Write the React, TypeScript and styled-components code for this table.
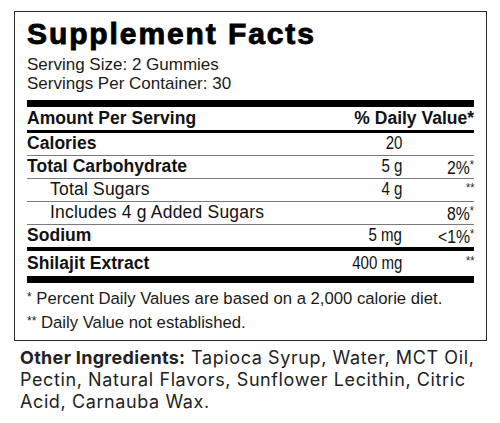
import React from "react";
import styled, { createGlobalStyle } from "styled-components";

const GlobalStyle = createGlobalStyle`
  html, body { margin: 0; padding: 0; background: #ffffff; }
  body { font-family: "Liberation Sans", Arial, sans-serif; color: #111; }
`;

const Page = styled.div`
  width: 500px;
  height: 423px;
  box-sizing: border-box;
  padding: 11px 13px 0 14px;
  overflow: hidden;
`;

const Label = styled.section`
  box-sizing: border-box;
  width: 473px;
  border: 1.5px solid #2a2a2a;
  padding: 0 12px 0 12px;
`;

const Title = styled.h1`
  margin: 4.5px 0 0 0;
  font-family: "Liberation Sans", Arial, sans-serif;
  font-weight: 700;
  font-size: 30px;
  line-height: 34px;
  letter-spacing: 1.9px;
  -webkit-text-stroke: 0.9px #000;
  color: #000;
`;

const Serving = styled.div`
  margin-top: 4px;
  font-size: 17px;
  line-height: 19px;
  color: #1a1a1a;
`;

const ServingLine = styled.div`
  white-space: nowrap;
`;

const Rule = styled.div<{ $h: number; $gap?: number }>`
  height: ${(p) => p.$h}px;
  margin-top: ${(p) => p.$gap ?? 0}px;
  background: #000;
`;

const Row = styled.div<{ $h?: number; $line?: boolean }>`
  display: grid;
  grid-template-columns: 1fr auto 72px;
  align-items: center;
  height: ${(p) => p.$h ?? 22}px;
  border-bottom: ${(p) => (p.$line ? "1px solid #7a7a7a" : "none")};
  font-size: 17.5px;
  line-height: 19px;
  color: #111;
`;

const Name = styled.span<{ $bold?: boolean; $indent?: boolean }>`
  font-weight: ${(p) => (p.$bold ? 700 : 400)};
  letter-spacing: ${(p) => (p.$bold ? 0.05 : 0.2)}px;
  padding-left: ${(p) => (p.$indent ? 23 : 0)}px;
  white-space: nowrap;
`;

const Amount = styled.span`
  display: inline-block;
  text-align: right;
  transform: scaleX(0.86);
  transform-origin: right center;
  white-space: nowrap;
`;

const DV = styled.span`
  display: block;
  text-align: right;
  white-space: nowrap;
`;

const DVText = styled.span`
  display: inline-block;
  transform: scaleX(0.9);
  transform-origin: right center;
`;

const Star = styled.span`
  font-size: 12px;
  vertical-align: 5px;
  color: #222;
`;

const HeadRight = styled.span`
  grid-column: 2 / 4;
  text-align: right;
  font-weight: 700;
`;

const Footnotes = styled.div`
  padding: 3px 0 6px 0;
  font-size: 16.7px;
  line-height: 23px;
  color: #1a1a1a;
`;

const FootStar = styled.span`
  font-size: 12px;
  vertical-align: 3px;
`;

const Ingredients = styled.div`
  margin: 6px 0 0 6px;
  width: 470px;
  font-family: Inter, "Liberation Sans", sans-serif;
  font-size: 18px;
  line-height: 22px;
  letter-spacing: 0.6px;
  color: #222;
`;

const IngLine = styled.div`
  height: 22px;
  white-space: nowrap;
`;

const IngLabel = styled.strong`
  font-weight: 700;
  letter-spacing: 0.3px;
`;

type Item = {
  name: string;
  bold?: boolean;
  indent?: boolean;
  amount: string;
  dv: string;
  stars: string;
  h?: number;
  line?: boolean;
};

const items: Item[] = [
  { name: "Calories", bold: true, amount: "20", dv: "", stars: "", line: true },
  { name: "Total Carbohydrate", bold: true, amount: "5 g", dv: "2%", stars: "*", line: true },
  { name: "Total Sugars", indent: true, amount: "4 g", dv: "", stars: "**", line: true },
  { name: "Includes 4 g Added Sugars", indent: true, amount: "", dv: "8%", stars: "*", line: true },
  { name: "Sodium", bold: true, amount: "5 mg", dv: "<1%", stars: "*", h: 22 },
];

export default function App() {
  return (
    <>
      <GlobalStyle />
      <Page>
        <Label>
          <Title>Supplement Facts</Title>
          <Serving>
            <ServingLine>Serving Size: 2 Gummies</ServingLine>
            <ServingLine>Servings Per Container: 30</ServingLine>
          </Serving>
          <Rule $h={7} $gap={7} />
          <Row $h={23}>
            <Name $bold>Amount Per Serving</Name>
            <HeadRight>% Daily Value*</HeadRight>
          </Row>
          <Rule $h={3} />
          {items.map((it) => (
            <Row key={it.name} $h={it.h} $line={it.line}>
              <Name $bold={it.bold} $indent={it.indent}>
                {it.name}
              </Name>
              <Amount>{it.amount}</Amount>
              <DV>
                <DVText>
                  {it.dv}
                  {it.stars && <Star>{it.stars}</Star>}
                </DVText>
              </DV>
            </Row>
          ))}
          <Rule $h={4} />
          <Row $h={25}>
            <Name $bold>Shilajit Extract</Name>
            <Amount>400 mg</Amount>
            <DV>
              <DVText>
                <Star>**</Star>
              </DVText>
            </DV>
          </Row>
          <Rule $h={7} />
          <Footnotes>
            <div>
              <FootStar>*</FootStar> Percent Daily Values are based on a 2,000 calorie diet.
            </div>
            <div>
              <FootStar>**</FootStar> Daily Value not established.
            </div>
          </Footnotes>
        </Label>
        <Ingredients>
          <IngLine>
            <IngLabel>Other Ingredients:</IngLabel> Tapioca Syrup, Water, MCT Oil,
          </IngLine>
          <IngLine>Pectin, Natural Flavors, Sunflower Lecithin, Citric</IngLine>
          <IngLine>Acid, Carnauba Wax.</IngLine>
        </Ingredients>
      </Page>
    </>
  );
}
